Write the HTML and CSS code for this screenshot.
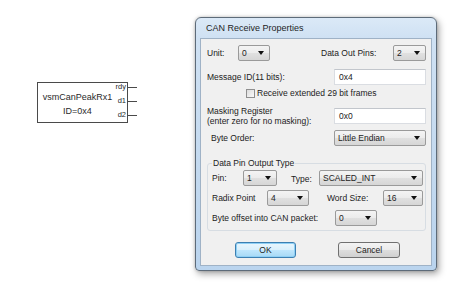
FILE: index.html
```html
<!DOCTYPE html>
<html>
<head>
<meta charset="utf-8">
<link rel="stylesheet" href="styles.css">
</head>
<body>
<div class="canvas">
  <div class="symbol">
    <div class="sym-body">
      <div class="sym-name">
        <div>vsmCanPeakRx1</div>
        <div>ID=0x4</div>
      </div>
      <div class="sym-pins">
        <span class="pin pin-rdy">rdy</span>
        <span class="pin">d1</span>
        <span class="pin">d2</span>
      </div>
    </div>
    <div class="sym-leads">
      <span class="lead"></span>
      <span class="lead"></span>
      <span class="lead"></span>
    </div>
  </div>

  <div class="dialog">
    <div class="titlebar">CAN Receive Properties</div>
    <div class="panel">
      <div class="row r-unit">
        <span class="lbl w-unit">Unit:</span>
        <div class="combo w32"><span>0</span><i class="arrow"></i></div>
        <span class="grow"></span>
        <span class="lbl w-pins">Data Out Pins:</span>
        <div class="combo w33"><span>2</span><i class="arrow"></i></div>
      </div>
      <div class="row r-msg">
        <span class="lbl grow">Message ID(11 bits):</span>
        <div class="textbox">0x4</div>
      </div>
      <div class="row r-check">
        <span class="checkbox"></span>
        <span class="lbl">Receive extended 29 bit frames</span>
      </div>
      <div class="row r-mask">
        <span class="lbl grow two">Masking Register<br>(enter zero for no masking):</span>
        <div class="textbox tb-mask">0x0</div>
      </div>
      <div class="row r-order">
        <span class="lbl grow ind">Byte Order:</span>
        <div class="combo w92"><span>Little Endian</span><i class="arrow"></i></div>
      </div>
      <fieldset class="group">
        <legend>Data Pin Output Type</legend>
        <div class="row r-pin">
          <span class="lbl w-pin">Pin:</span>
          <div class="combo w34"><span>1</span><i class="arrow"></i></div>
          <span class="lbl w-type">Type:</span>
          <div class="combo grow"><span>SCALED_INT</span><i class="arrow"></i></div>
        </div>
        <div class="row r-radix">
          <span class="lbl w-radix">Radix Point</span>
          <div class="combo w42"><span>4</span><i class="arrow"></i></div>
          <span class="lbl w-word">Word Size:</span>
          <div class="combo w40"><span>16</span><i class="arrow"></i></div>
        </div>
        <div class="row r-offset">
          <span class="lbl w-offset">Byte offset into CAN packet:</span>
          <div class="combo w42"><span>0</span><i class="arrow"></i></div>
        </div>
      </fieldset>
      <div class="buttons">
        <div class="btn btn-ok">OK</div>
        <div class="btn">Cancel</div>
      </div>
    </div>
  </div>
</div>
</body>
</html>
```

FILE: styles.css
```css
* { box-sizing: border-box; }
html, body { margin: 0; padding: 0; background: #ffffff; }
body { font-family: "Liberation Sans", Arial, sans-serif; color: #222; }

.canvas { position: relative; width: 468px; height: 291px; overflow: hidden; background: #fff; }

/* schematic symbol */
.symbol { position: absolute; left: 37px; top: 82px; display: flex; }
.sym-body {
  width: 91px; height: 41px;
  border: 1px solid #4a4a4a;
  display: flex;
  background: #fff;
}
.sym-name {
  flex: 1;
  display: flex; flex-direction: column; align-items: center;
  padding-top: 7px; padding-left: 3px;
  font-size: 9px; line-height: 14px; color: #2a2a2a;
}
.sym-pins {
  width: 13px;
  display: flex; flex-direction: column; align-items: flex-end;
  padding-right: 1px;
  font-size: 7.5px; line-height: 14px; color: #2a2a2a;
}
.pin-rdy { margin-top: -3px; }
.sym-leads { display: flex; flex-direction: column; padding-top: 5px; gap: 13px; }
.lead { display: block; width: 9px; height: 1px; background: #4a4a4a; }

/* dialog */
.dialog {
  position: absolute; left: 195px; top: 17px;
  width: 242px; height: 254px;
  border: 1px solid #5d6b79;
  border-radius: 6px 6px 4px 4px;
  background: linear-gradient(180deg, #dbe9f7 0px, #cfe1f3 20px, #c3d9ef 60%, #bad4ee 100%);
  padding: 0 4px 4px 4px;
  box-shadow: 2px 3px 7px rgba(0,0,0,0.35), 0 0 3px rgba(0,0,0,0.2);
}
.titlebar {
  height: 20px;
  padding-left: 6px;
  font-size: 9px; line-height: 21px; color: #1e1e1e;
}
.panel {
  height: 228px;
  background: #f0f0f0;
  border: 1px solid #9fb2c6;
  padding: 6px 5px 0 6px;
  display: flex; flex-direction: column;
}

.row { display: flex; align-items: center; height: 16px; }
.lbl { font-size: 8.5px; line-height: 10px; white-space: nowrap; color: #222; }
.grow { flex: 1; }

.r-msg { margin-top: 8px; }
.r-check { margin-top: 3px; height: 10px; padding-left: 39px; }
.r-mask { margin-top: 8px; height: 20px; align-items: flex-start; }
.r-order { margin-top: 4px; }
.ind { padding-left: 4px; }

.w-unit { width: 31px; }
.w-pins { width: 72px; }
.w-pin { width: 31px; }
.w-type { width: 28px; margin-left: 14px; padding-top: 2px; }
.w-radix { width: 55px; }
.w-word { width: 56px; margin-left: 18px; }
.w-offset { width: 123px; }

.w32 { width: 32px; }
.w33 { width: 33px; }
.w34 { width: 34px; }
.w40 { width: 40px; }
.w42 { width: 42px; }
.w92 { width: 92px; }

.combo {
  position: relative;
  height: 16px;
  border: 1px solid #9a9a9a;
  border-radius: 2px;
  background: linear-gradient(180deg, #f4f4f4 0%, #ececec 48%, #e0e0e0 52%, #d6d6d6 100%);
  font-size: 8.5px; line-height: 14px;
  padding-left: 3px;
  color: #222;
}
.combo.grow { flex: 1; }
.arrow {
  position: absolute; right: 5px; top: 5px;
  width: 0; height: 0;
  border-left: 3px solid transparent;
  border-right: 3px solid transparent;
  border-top: 4px solid #111;
}

.textbox {
  width: 92px; height: 16px;
  background: #fff;
  border: 1px solid #dadde2;
  border-top-color: #c2c6cc;
  font-size: 8.5px; line-height: 14px;
  padding-left: 4px;
  color: #222;
}
.tb-mask { margin-top: 2px; }

.checkbox {
  width: 9px; height: 9px;
  border: 1px solid #8f8f8f;
  background: linear-gradient(135deg, #dcdcdc, #fafafa);
  margin-right: 2px;
}

.group {
  margin: 12px 0 0 0;
  padding: 2px 2px 4px 4px;
  border: 1px solid #d7dde3;
  border-radius: 3px;
  min-width: 0;
}
.group legend {
  padding: 0 1px;
  font-size: 8.5px; line-height: 10px; color: #222;
}
.r-radix { margin-top: 4px; }
.r-offset { margin-top: 4px; }

.buttons {
  margin-top: 11px;
  display: flex; justify-content: center; gap: 42px;
  padding-left: 2px;
}
.btn {
  width: 62px; height: 16px;
  border: 1px solid #707070;
  border-radius: 3px;
  background: linear-gradient(180deg, #f3f3f3 0%, #ebebeb 48%, #dddddd 52%, #d0d0d0 100%);
  font-size: 8.5px; line-height: 14px; text-align: center; color: #222;
}
.btn-ok {
  width: 61px;
  border-color: #3c7fb1;
  background: linear-gradient(180deg, #eaf6fd 0%, #d9f0fc 48%, #bee6fd 52%, #a7d9f5 100%);
  box-shadow: inset 0 0 0 1px #8fd0f5;
}
```
